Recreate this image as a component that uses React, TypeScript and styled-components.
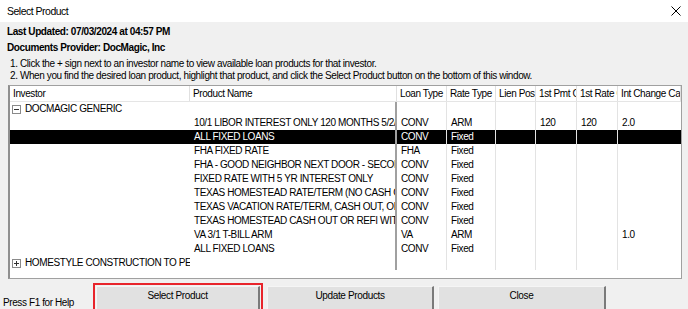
import styled, { createGlobalStyle } from 'styled-components';

const GlobalStyle = createGlobalStyle`
  html, body {
    margin: 0;
    padding: 0;
    background: #f0f0f0;
    overflow: hidden;
  }
  body {
    font-family: "Liberation Sans", Arial, sans-serif;
    font-size: 10px;
    letter-spacing: -0.4px;
    color: #000;
  }
`;

const Window = styled.div`
  width: 688px;
  height: 309px;
  display: flex;
  flex-direction: column;
  background: #f0f0f0;
  overflow: hidden;
`;

const TitleBar = styled.div`
  height: 22px;
  flex: none;
  display: flex;
  align-items: center;
  justify-content: space-between;
  background: #fff;
  padding: 0 6px 0 7px;
  font-size: 10.5px;
  letter-spacing: -0.5px;
  color: #000;
`;

const CloseGlyph = styled.svg`
  width: 10px;
  height: 10px;
  margin-right: 1px;
`;

const Body = styled.div`
  display: flex;
  flex-direction: column;
  padding: 2px 6px 0 7px;
`;

const InfoLine = styled.div`
  font-weight: bold;
  height: 16px;
  line-height: 16px;
  white-space: nowrap;
`;

const Steps = styled.div`
  margin-top: 2px;
  padding-left: 3px;
  display: flex;
  flex-direction: column;
`;

const Step = styled.div`
  height: 12px;
  line-height: 12px;
  white-space: nowrap;
`;

const Grid = styled.div`
  margin-top: 3px;
  margin-left: 1px;
  height: 192px;
  background: #fff;
  border: 1px solid #a0a0a0;
  border-left: 2px solid #8f8f8f;
  display: flex;
  flex-direction: column;
  overflow: hidden;
`;

const COLS = '180px 207px 50px 49px 40px 41px 41px 1fr';

const HeaderRow = styled.div`
  display: grid;
  grid-template-columns: ${COLS};
  height: 15px;
  border-bottom: 1px solid #e5e5e5;
`;

const HeaderCell = styled.div`
  padding-left: 3px;
  line-height: 15px;
  white-space: nowrap;
  overflow: hidden;
  border-right: 1px solid #e0e0e0;
`;

const Row = styled.div<{ $selected?: boolean }>`
  display: grid;
  grid-template-columns: ${COLS};
  height: 14px;
  background: ${(p) => (p.$selected ? '#000' : '#fff')};
  color: ${(p) => (p.$selected ? '#fff' : '#000')};
`;

const Cell = styled.div<{ $line?: 'none' | 'light' | 'dark' }>`
  padding-left: 4px;
  line-height: 14px;
  white-space: nowrap;
  overflow: hidden;
  border-right: ${(p) =>
    p.$line === 'dark'
      ? '2px solid #a0a0a0'
      : p.$line === 'light'
      ? '1px solid #e3e3e3'
      : 'none'};
`;

const GroupCell = styled.div`
  grid-column: 1 / 2;
  display: flex;
  align-items: center;
  gap: 4px;
  padding-left: 2px;
  white-space: nowrap;
  overflow: hidden;
  line-height: 14px;
`;

const ToggleBox = styled.span`
  width: 7px;
  height: 7px;
  border: 1px solid #8a8a8a;
  display: inline-flex;
  align-items: center;
  justify-content: center;
  flex: none;
  background: #fff;
`;

const Footer = styled.div`
  display: flex;
  align-items: flex-end;
  margin-top: 2px;
  flex: 1;
`;

const HelpText = styled.div`
  width: 93px;
  padding-left: 3px;
  padding-bottom: 1px;
  white-space: nowrap;
  flex: none;
  box-sizing: border-box;
`;

const FocusRing = styled.div`
  border: 2px solid #e8242b;
  padding: 1px;
  margin-bottom: -6px;
  display: flex;
`;

const Button = styled.button<{ $w: number }>`
  width: ${(p) => p.$w}px;
  height: 26px;
  flex: none;
  background: #e1e1e1;
  border: none;
  border-top: 1px solid #f5f5f5;
  border-left: 1px solid #f5f5f5;
  border-right: 2px solid #7a7a7a;
  border-bottom: 2px solid #7a7a7a;
  font-family: "Liberation Sans", Arial, sans-serif;
  font-size: 10px;
  letter-spacing: -0.35px;
  color: #000;
  padding: 0 0 6px;
  margin: 0;
`;

const Buttons = styled.div`
  display: flex;
  align-items: flex-start;
  gap: 4px;
  height: 26px;
`;

const PlainButton = styled(Button)`
  margin-top: 3px;
`;

type Product = {
  name: string;
  loan: string;
  rate: string;
  pmt?: string;
  rateCh?: string;
  cap?: string;
  selected?: boolean;
};

const products: Product[] = [
  { name: '10/1 LIBOR INTEREST ONLY 120 MONTHS 5/2/5 CAP', loan: 'CONV', rate: 'ARM', pmt: '120', rateCh: '120', cap: '2.0' },
  { name: 'ALL FIXED LOANS', loan: 'CONV', rate: 'Fixed', selected: true },
  { name: 'FHA FIXED RATE', loan: 'FHA', rate: 'Fixed' },
  { name: 'FHA - GOOD NEIGHBOR NEXT DOOR - SECOND', loan: 'CONV', rate: 'Fixed' },
  { name: 'FIXED RATE WITH 5 YR INTEREST ONLY', loan: 'CONV', rate: 'Fixed' },
  { name: 'TEXAS HOMESTEAD RATE/TERM (NO CASH OUT)', loan: 'CONV', rate: 'Fixed' },
  { name: 'TEXAS VACATION RATE/TERM, CASH OUT, OR', loan: 'CONV', rate: 'Fixed' },
  { name: 'TEXAS HOMESTEAD CASH OUT OR REFI WITH CASH', loan: 'CONV', rate: 'Fixed' },
  { name: 'VA 3/1 T-BILL ARM', loan: 'VA', rate: 'ARM', cap: '1.0' },
  { name: 'ALL FIXED LOANS', loan: 'CONV', rate: 'Fixed' },
];

const headers = ['Investor', 'Product Name', 'Loan Type', 'Rate Type', 'Lien Pos', '1st Pmt Change', '1st Rate Change', 'Int Change Cap'];

const Toggle = ({ open }: { open: boolean }) => (
  <ToggleBox>
    <svg width="7" height="7" viewBox="0 0 7 7">
      <line x1="1" y1="3.5" x2="6" y2="3.5" stroke="#333" strokeWidth="1" />
      {!open && <line x1="3.5" y1="1" x2="3.5" y2="6" stroke="#333" strokeWidth="1" />}
    </svg>
  </ToggleBox>
);

const EmptyCells = () => (
  <>
    <Cell $line="dark" />
    <Cell $line="light" />
    <Cell $line="light" />
    <Cell $line="light" />
    <Cell $line="light" />
    <Cell $line="light" />
    <Cell />
  </>
);

const App = () => {
  return (
    <>
      <GlobalStyle />
      <Window>
        <TitleBar>
          <span>Select Product</span>
          <CloseGlyph viewBox="0 0 10 10">
            <path d="M0.5 0.5 L9.5 9.5 M9.5 0.5 L0.5 9.5" stroke="#000" strokeWidth="1" />
          </CloseGlyph>
        </TitleBar>
        <Body>
          <InfoLine>Last Updated: 07/03/2024 at 04:57 PM</InfoLine>
          <InfoLine>Documents Provider: DocMagic, Inc</InfoLine>
          <Steps>
            <Step>1. Click the + sign next to an investor name to view available loan products for that investor.</Step>
            <Step>2. When you find the desired loan product, highlight that product, and click the Select Product button on the bottom of this window.</Step>
          </Steps>
          <Grid>
            <HeaderRow>
              {headers.map((h) => (
                <HeaderCell key={h}>{h}</HeaderCell>
              ))}
            </HeaderRow>
            <Row>
              <GroupCell>
                <Toggle open />
                DOCMAGIC GENERIC
              </GroupCell>
              <EmptyCells />
            </Row>
            {products.map((p, i) => (
              <Row key={i} $selected={p.selected}>
                <Cell />
                <Cell $line="dark">{p.name}</Cell>
                <Cell $line="light">{p.loan}</Cell>
                <Cell $line="light">{p.rate}</Cell>
                <Cell $line="light" />
                <Cell $line="light">{p.pmt}</Cell>
                <Cell $line="light">{p.rateCh}</Cell>
                <Cell>{p.cap}</Cell>
              </Row>
            ))}
            <Row>
              <GroupCell>
                <Toggle open={false} />
                HOMESTYLE CONSTRUCTION TO PERM
              </GroupCell>
              <EmptyCells />
            </Row>
          </Grid>
        </Body>
        <Footer>
          <HelpText>Press F1 for Help</HelpText>
          <Buttons>
            <FocusRing>
              <Button $w={164}>Select Product</Button>
            </FocusRing>
            <PlainButton $w={167}>Update Products</PlainButton>
            <PlainButton $w={168}>Close</PlainButton>
          </Buttons>
        </Footer>
      </Window>
    </>
  );
};

export default App;
